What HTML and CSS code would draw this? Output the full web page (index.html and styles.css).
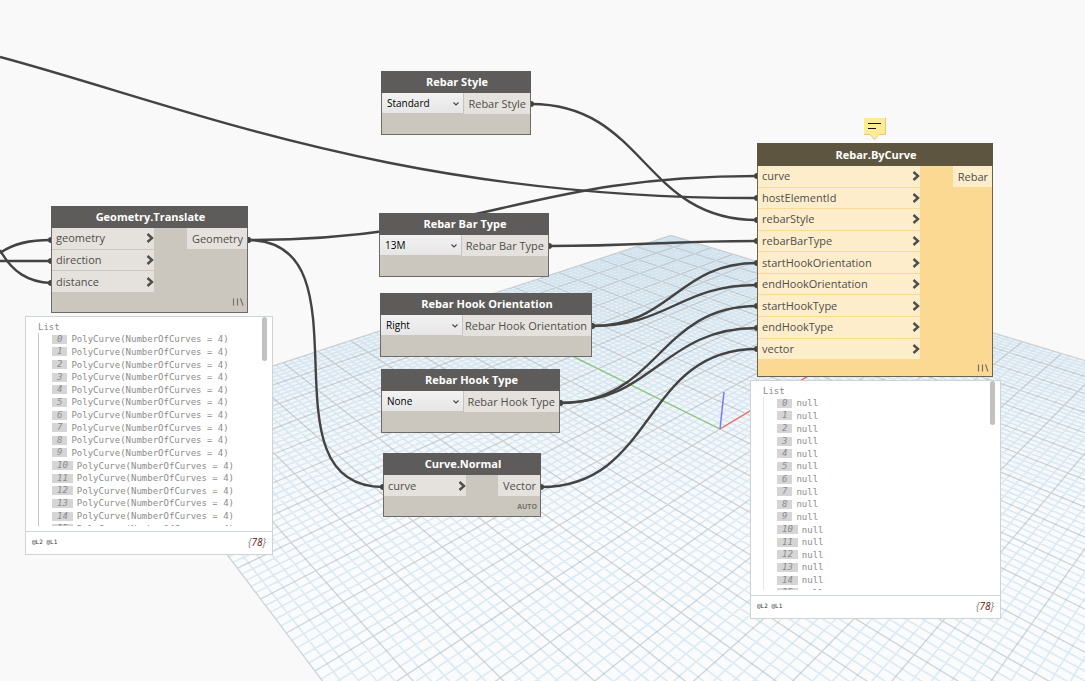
FILE: index.html
```html
<!DOCTYPE html>
<html lang="en">
<head>
<meta charset="utf-8">
<title>Rebar graph</title>
<link rel="stylesheet" href="styles.css">
</head>
<body>
<svg width="0" height="0" class="defs" aria-hidden="true">
  <symbol id="chev" viewBox="0 0 8 10"><path d="M1.5 1 L6 5 L1.5 9" fill="none" stroke="currentColor" stroke-width="2.4"/></symbol>
  <symbol id="down" viewBox="0 0 8 6"><path d="M1.5 1.5 L4 4 L6.5 1.500" fill="none" stroke="currentColor" stroke-width="1.1"/></symbol>
  <symbol id="lace" viewBox="0 0 12 8"><path d="M1.5 0.5V7.5M5.5 0.5V7.5M8.5 0.5L11 7.5" fill="none" stroke="currentColor" stroke-width="1.2"/></symbol>
</svg>
<main class="canvas">
  <svg class="layer" aria-hidden="true">
    <defs>
      <linearGradient id="depth" gradientUnits="userSpaceOnUse" x1="0" y1="235" x2="0" y2="520">
        <stop offset="0" stop-color="#e4eef4"/>
        <stop offset="1" stop-color="#f9fbfd"/>
      </linearGradient>
    </defs>
    <path id="plane" fill="url(#depth)"/>
    <path id="minor" class="minor"/>
    <path id="major" class="major"/>
    <path class="axis-y" d="M720 429L465 303"/>
    <path class="axis-x" d="M720 429L918 310"/>
    <path class="axis-z" d="M720 429L724 392"/>
  </svg>
  <svg class="layer" aria-hidden="true">
    <g id="wires" class="wires">
      <path d="M0 57C180 105 400 199 757 198"/>
      <path d="M0 253C14 243 30 240 51 240"/>
      <path d="M0 261H51"/>
      <path d="M0 250C12 272 28 282 51 283"/>
    </g>
    <g id="dots" class="dots"></g>
  </svg>

  <section class="node translate">
    <h2>Geometry.Translate</h2>
    <div class="ports">
      <ul class="inputs">
        <li>geometry<svg class="chev"><use href="#chev"/></svg></li>
        <li>direction<svg class="chev"><use href="#chev"/></svg></li>
        <li>distance<svg class="chev"><use href="#chev"/></svg></li>
      </ul>
      <span class="output">Geometry</span>
    </div>
    <div class="foot"><svg class="lace"><use href="#lace"/></svg></div>
  </section>

  <section class="node style">
    <h2>Rebar Style</h2>
    <div class="ports">
      <div class="pick"><select aria-label="Rebar Style"><option>Standard</option></select><svg class="down"><use href="#down"/></svg></div>
      <span class="output">Rebar Style</span>
    </div>
    <div class="foot"></div>
  </section>

  <section class="node bar">
    <h2>Rebar Bar Type</h2>
    <div class="ports">
      <div class="pick"><select aria-label="Rebar Bar Type"><option>13M</option></select><svg class="down"><use href="#down"/></svg></div>
      <span class="output">Rebar Bar Type</span>
    </div>
    <div class="foot"></div>
  </section>

  <section class="node orient">
    <h2>Rebar Hook Orientation</h2>
    <div class="ports">
      <div class="pick"><select aria-label="Rebar Hook Orientation"><option>Right</option></select><svg class="down"><use href="#down"/></svg></div>
      <span class="output">Rebar Hook Orientation</span>
    </div>
    <div class="foot"></div>
  </section>

  <section class="node hook">
    <h2>Rebar Hook Type</h2>
    <div class="ports">
      <div class="pick"><select aria-label="Rebar Hook Type"><option>None</option></select><svg class="down"><use href="#down"/></svg></div>
      <span class="output">Rebar Hook Type</span>
    </div>
    <div class="foot"></div>
  </section>

  <section class="node normal">
    <h2>Curve.Normal</h2>
    <div class="ports">
      <ul class="inputs">
        <li>curve<svg class="chev"><use href="#chev"/></svg></li>
      </ul>
      <span class="output">Vector</span>
    </div>
    <div class="foot">AUTO</div>
  </section>

  <svg class="note" viewBox="0 0 22 22" role="img" aria-label="Note">
    <path d="M0 0H21V16H15L10.500 21L6 16H0Z" fill="#fdeb96"/>
    <path d="M21.500 0V16.500H15L10.500 21.500L6 16.500H0" fill="none" stroke="#e3c973"/>
    <path d="M4 5.500H17M4 10.500H12" stroke="#111" stroke-width="1.200"/>
  </svg>

  <section class="node bycurve">
    <h2>Rebar.ByCurve</h2>
    <div class="ports">
      <ul class="inputs">
        <li>curve<svg class="chev"><use href="#chev"/></svg></li>
        <li>hostElementId<svg class="chev"><use href="#chev"/></svg></li>
        <li>rebarStyle<svg class="chev"><use href="#chev"/></svg></li>
        <li>rebarBarType<svg class="chev"><use href="#chev"/></svg></li>
        <li>startHookOrientation<svg class="chev"><use href="#chev"/></svg></li>
        <li>endHookOrientation<svg class="chev"><use href="#chev"/></svg></li>
        <li>startHookType<svg class="chev"><use href="#chev"/></svg></li>
        <li>endHookType<svg class="chev"><use href="#chev"/></svg></li>
        <li>vector<svg class="chev"><use href="#chev"/></svg></li>
      </ul>
      <span class="output">Rebar</span>
    </div>
    <div class="foot"><svg class="lace"><use href="#lace"/></svg></div>
  </section>

  <section class="preview left">
    <div class="tree">
      <div class="root">List</div>
      <ol class="items" data-value="PolyCurve(NumberOfCurves = 4)"></ol>
      <div class="thumb"></div>
    </div>
    <footer><span class="levels">@L2 @L1</span><span class="count">{<b>78</b>}</span></footer>
  </section>

  <section class="preview right">
    <div class="tree">
      <div class="root">List</div>
      <ol class="items" data-value="null"></ol>
      <div class="thumb"></div>
    </div>
    <footer><span class="levels">@L2 @L1</span><span class="count">{<b>78</b>}</span></footer>
  </section>
</main>
<script src="graph.js"></script>
</body>
</html>
```
FILE: styles.css
```css
* { box-sizing: border-box; }
body {
  margin: 0;
  font-family: "Open Sans", "Noto Sans", sans-serif;
  font-size: 11px;
  background: #f9f9f9;
}
h2, ul, ol { margin: 0; padding: 0; list-style: none; }
.defs { position: absolute; }
.canvas { position: relative; height: 100vh; overflow: hidden; }
.layer { position: absolute; inset: 0; width: 100%; height: 100%; }

.minor { fill: none; stroke: #bfd8e8; stroke-opacity: .5; stroke-width: 1.5; }
.major { fill: none; stroke: #a3adb3; stroke-opacity: .5; stroke-width: 1.3; }
.axis-x { stroke: #f2686c; stroke-width: 1.3; }
.axis-y { stroke: #86c97c; stroke-width: 1.3; }
.axis-z { stroke: #7a7af2; stroke-width: 1.5; }
.wires { fill: none; stroke: #434343; stroke-width: 2.4; }
.dots { fill: #434343; }

.node {
  position: absolute;
  display: flex;
  flex-direction: column;
  background: #cbc6be;
  border: 1px solid #6d6b67;
  border-top: 0;
  color: #4f4e4b;
}
.node h2 {
  height: 22px;
  margin: 0 -1px;
  padding-left: 2px;
  background: #5e5c5a;
  color: #fff;
  font-size: 11px;
  font-weight: 700;
  line-height: 22px;
  text-align: center;
}
.ports { display: flex; justify-content: space-between; align-items: flex-start; }
.inputs { display: flex; flex-direction: column; gap: 1px; }
.inputs li {
  flex: 1;
  display: flex;
  align-items: center;
  justify-content: space-between;
  padding: 0 0 0 4px;
  background: #e5e2dd;
  line-height: 14px;
}
.output { padding: 0 4px 0 5px; background: #e5e2dd; line-height: 21px; white-space: nowrap; }
.chev { width: 8px; height: 10px; }
.foot {
  flex: 1;
  display: flex;
  align-items: center;
  justify-content: flex-end;
  padding: 0 3px;
  color: #77736d;
  font-size: 7px;
  font-weight: 700;
}
.lace { width: 12px; height: 8px; }

.pick { position: relative; flex: none; width: 82px; }
.pick + .output { flex: 1; text-align: right; padding-left: 0; }
.pick select {
  appearance: none;
  display: block;
  width: 100%;
  height: 20px;
  padding: 0 5px;
  border: 0;
  border-right: 1px solid #c4c4c4;
  border-radius: 0;
  background: linear-gradient(#f2f2f2, #e6e6e6);
  color: #000;
  font: 10px "Open Sans", "Noto Sans", sans-serif;
}
.down { position: absolute; right: 4px; top: 8px; width: 8px; height: 6px; color: #444; pointer-events: none; }

.translate { left: 51px; top: 206px; width: 197px; height: 107px; }
.translate .inputs { width: 102px; height: 64px; }
.style { left: 381px; top: 71px; width: 150px; height: 64px; }
.bar { left: 379px; top: 213px; width: 170px; height: 64px; }
.orient { left: 380px; top: 293px; width: 212px; height: 64px; }
.hook { left: 381px; top: 369px; width: 179px; height: 64px; }
.normal { left: 383px; top: 453px; width: 158px; height: 64px; }
.normal .inputs { width: 82px; height: 21px; }
.bycurve { left: 757px; top: 143px; width: 236px; height: 234px; background: #fcd993; border-color: #6d6448; }
.bycurve h2 { height: 23px; line-height: 23px; background: #5e5540; }
.bycurve .inputs { width: 162px; height: 193px; }
.bycurve .inputs li, .bycurve .output { background: #fdedcb; }
.note { position: absolute; left: 864px; top: 118px; width: 22px; height: 22px; }

.preview {
  position: absolute;
  display: flex;
  flex-direction: column;
  height: 239px;
  background: #fff;
  border: 1px solid #cfd3d3;
  color: #8b8b8b;
  font: 9px "DejaVu Sans Mono", monospace;
}
.preview.left { left: 25px; top: 316px; width: 248px; }
.preview.right { left: 750px; top: 380px; width: 251px; }
.tree { position: relative; height: 209px; padding: 4px 12px 0; overflow: hidden; }
.root { height: 12px; line-height: 12px; }
.items {
  display: grid;
  grid-template-rows: repeat(16, 1fr);
  height: 202px;
  padding-left: 13px;
  border-left: 1px solid #c4c4c4;
}
.right .items { border-color: #e6e6e6; }
.items li { display: flex; align-items: center; gap: 4px; white-space: pre; }
.items i { padding: 0 5px; background: #d5d5d5; line-height: 9px; }
.thumb { position: absolute; top: 0; right: 5px; width: 5px; height: 44px; border-radius: 3px; background: #c1c1c1; }
.preview footer {
  flex: 1;
  display: flex;
  align-items: center;
  justify-content: space-between;
  margin-top: 5px;
  padding: 0 6px 3px;
  border-top: 1px solid #cfd3d3;
}
.levels { color: #333; font-size: 6px; }
.count { font: italic 10px "Open Sans", sans-serif; color: #777; }
.count b { color: #6b0f0f; font-weight: 400; }
```
FILE: graph.js
```js
// Perspective projection of the ground plane, in plane units of one major cell.
function project(a, b) {
  const w = 1 + 0.0342 * a - 0.0375 * b;
  const x = (720 + 51.28 * a + 8.1 * b) / w;
  const y = (429 - 1.25 * a + 1.23 * b) / w;
  return x.toFixed(1) + ' ' + y.toFixed(1);
}
let minor = '';
let major = '';
for (let k = -50; k <= 50; k++) {
  const v = k / 5;
  const lines = `M${project(v, -10)}L${project(v, 10)}M${project(-10, v)}L${project(10, v)}`;
  if (k % 5 === 0) major += lines; else minor += lines;
}
document.getElementById('minor').setAttribute('d', minor);
document.getElementById('major').setAttribute('d', major);
document.getElementById('plane').setAttribute('d',
  `M${project(-10, -10)}L${project(10, -10)}L${project(10, 10)}L${project(-10, 10)}Z`);

// Connectors: start x, y, end x, y.
const wires = [
  [248, 240, 757, 176], [248, 240, 383, 487], [531, 104, 757, 220], [549, 246, 757, 241],
  [592, 326, 757, 263], [592, 326, 757, 285], [560, 403, 757, 306], [560, 403, 757, 328],
  [541, 487, 757, 349]
];
const dots = [[51, 240], [51, 261], [51, 283], [757, 198]];
let wireMarkup = '';
for (const [x1, y1, x2, y2] of wires) {
  const reach = 0.45 * Math.hypot(x2 - x1, y2 - y1);
  wireMarkup += `<path d="M${x1} ${y1}C${x1 + reach} ${y1} ${x2 - reach} ${y2} ${x2} ${y2}"/>`;
  dots.push([x1, y1], [x2, y2]);
}
document.getElementById('wires').insertAdjacentHTML('beforeend', wireMarkup);
document.getElementById('dots').innerHTML =
  dots.map(([x, y]) => `<circle cx="${x}" cy="${y}" r="3"/>`).join('');

for (const list of document.querySelectorAll('.items')) {
  for (let i = 0; i < 16; i++) {
    list.insertAdjacentHTML('beforeend', `<li><i>${i}</i>${list.dataset.value}</li>`);
  }
}
```
